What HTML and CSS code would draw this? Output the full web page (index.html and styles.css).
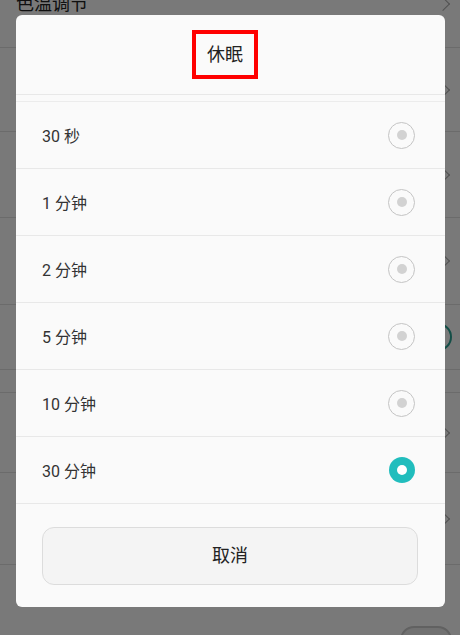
FILE: index.html
```html
<!DOCTYPE html>
<html lang="zh-CN">
<head>
  <meta charset="UTF-8">
  <title>休眠</title>
  <link rel="stylesheet" href="styles.css">
</head>
<body>

<div class="screen">
  <ul class="settings">
    <li class="row r1"><span class="name">色温调节</span><i class="chev"></i></li>
    <li class="row r2"><i class="chev"></i></li>
    <li class="row r3"><i class="chev"></i></li>
    <li class="row r4"><i class="chev"></i></li>
    <li class="row r5"><span class="switch on"></span></li>
    <li class="gap"></li>
    <li class="row r6"><i class="chev"></i></li>
    <li class="row r7"><i class="chev"></i></li>
    <li class="row r8"><span class="name">通知亮屏提示</span><span class="switch"></span></li>
  </ul>
  <div class="mask"></div>

  <div class="dialog">
    <div class="head">
      <h2 class="title">休眠</h2>
    </div>
    <ul class="options">
      <li><span>30 秒</span><i class="radio"></i></li>
      <li><span>1 分钟</span><i class="radio"></i></li>
      <li><span>2 分钟</span><i class="radio"></i></li>
      <li><span>5 分钟</span><i class="radio"></i></li>
      <li><span>10 分钟</span><i class="radio"></i></li>
      <li class="now"><span>30 分钟</span><i class="radio"></i></li>
    </ul>
    <div class="foot">
      <a href="javascript:void(0);" class="cancel">取消</a>
    </div>
  </div>
</div>

</body>
</html>
```

FILE: styles.css
```css
* {
  margin: 0;
  padding: 0;
  list-style: none;
  box-sizing: border-box;
}
body {
  font-family: Roboto, "Noto Sans CJK SC", sans-serif;
  color: #333;
}
.screen {
  width: 460px;
  height: 635px;
  overflow: hidden;
  position: relative;
  background-color: #fff;
}

/* 背景设置列表 */
.settings {
  margin-top: -40px;
}
.settings .row {
  display: flex;
  align-items: center;
  justify-content: space-between;
  padding: 0 8px 0 16px;
  border-bottom: 1px solid #e2e2e2;
}
.settings .name {
  font-size: 18px;
  line-height: 18px;
  color: #222;
}
.r1 { height: 88px; }
.r2, .r3, .r4, .r6, .r7, .r5 { justify-content: flex-end !important; }
.r2 { height: 84px; }
.r3 { height: 86px; }
.r4 { height: 87px; }
.r5 { height: 65px; }
.r6 { height: 80px; }
.r7 { height: 92px; }
.r8 {
  height: 90px;
  align-items: flex-end !important;
  padding-bottom: 8px;
}
.r8 .name {
  font-size: 16px;
  color: #555;
}
.settings .gap {
  height: 23px;
  border-bottom: 1px solid #e2e2e2;
}
.chev {
  width: 10px;
  height: 10px;
  border-top: 1.5px solid #aaa;
  border-right: 1.5px solid #aaa;
  transform: rotate(45deg);
  margin-right: 4px;
}
.switch {
  width: 52px;
  height: 28px;
  border-radius: 14px;
  border: 2px solid #ccc;
  background-color: #eee;
}
.switch.on {
  border-color: #2aa596;
  background-color: #fff;
}

.mask {
  position: absolute;
  left: 0;
  top: 0;
  right: 0;
  bottom: 0;
  background-color: rgba(0,0,0,.525);
}

/* 弹窗 */
.dialog {
  position: absolute;
  left: 16px;
  top: 15px;
  width: 429px;
  height: 592px;
  background-color: #fafafa;
  border-radius: 6px;
  overflow: hidden;
}
.head {
  display: flex;
  justify-content: center;
  padding: 15px 11px 15px 0;
  border-bottom: 1px solid #e8e8e8;
  margin-bottom: 6px;
}
.title {
  width: 66px;
  height: 49px;
  border: 4px solid #f00;
  font-size: 18px;
  font-weight: normal;
  line-height: 41px;
  text-align: center;
  color: #222;
}
.options {
  border-top: 1px solid #ececec;
}
.options li {
  height: 67px;
  display: flex;
  align-items: center;
  justify-content: space-between;
  padding: 0 30px 0 26px;
  border-bottom: 1px solid #e8e8e8;
  font-size: 16px;
  color: #333;
}
.radio {
  width: 27px;
  height: 27px;
  border-radius: 50%;
  border: 1.5px solid #c4c4c4;
  display: flex;
  align-items: center;
  justify-content: center;
}
.radio::after {
  content: "";
  width: 10px;
  height: 10px;
  border-radius: 50%;
  background-color: #d2d2d2;
}
.options li.now .radio {
  width: 26px;
  height: 26px;
  border: none;
  background-color: #21bdbd;
}
.options li.now .radio::after {
  background-color: #fff;
}
.foot {
  padding: 23px 27px 23px 26px;
}
.cancel {
  display: block;
  height: 58px;
  line-height: 56px;
  text-align: center;
  border: 1px solid #dcdcdc;
  border-radius: 12px;
  background-color: #f4f4f4;
  font-size: 18px;
  color: #222;
  text-decoration: none;
}
```
